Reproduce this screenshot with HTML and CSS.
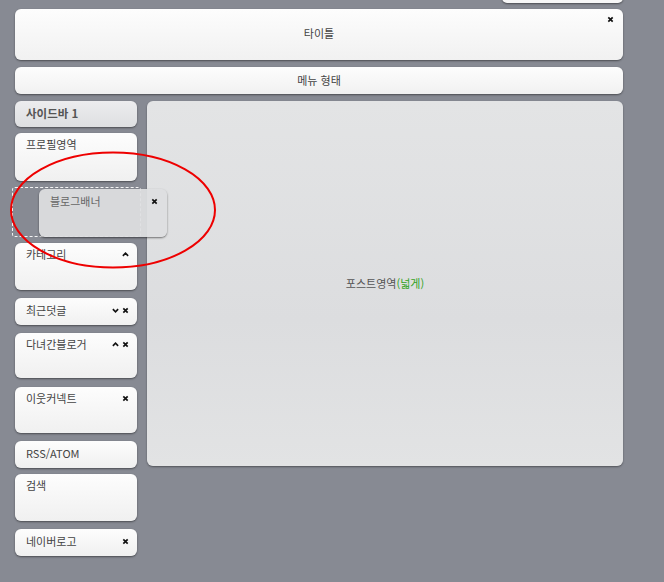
FILE: index.html
```html
<!DOCTYPE html>
<html lang="ko">
<head>
<meta charset="utf-8">
<link rel="stylesheet" href="styles.css">
</head>
<body>
<div class="page">
  <div class="peek-row"><div class="peek"></div></div>
  <div class="bar title">타이틀
    <span class="tools"><svg class="ic" viewBox="0 0 8 8"><path d="M1.5 1.5 6.5 6.5M6.5 1.5 1.5 6.5"/></svg></span>
  </div>
  <div class="bar menu">메뉴 형태</div>
  <div class="content">
    <div class="sidebar">
      <div class="item head h26">사이드바 1</div>
      <div class="item h48 m6">프로필영역</div>
      <div class="placeholder m6">
        <div class="dragging">블로그배너
          <span class="tools"><svg class="ic" viewBox="0 0 8 8"><path d="M1.5 1.5 6.5 6.5M6.5 1.5 1.5 6.5"/></svg></span>
        </div>
      </div>
      <div class="item h47 m6">카테고리
        <span class="tools"><svg class="ic" viewBox="0 0 8 8"><path d="M1 5.5 4 2.5 7 5.5"/></svg></span>
      </div>
      <div class="item h27 m8">최근덧글
        <span class="tools"><svg class="ic" viewBox="0 0 8 8"><path d="M1 2.5 4 5.5 7 2.5"/></svg><svg class="ic" viewBox="0 0 8 8"><path d="M1.5 1.5 6.5 6.5M6.5 1.5 1.5 6.5"/></svg></span>
      </div>
      <div class="item h45 m8">다녀간블로거
        <span class="tools"><svg class="ic" viewBox="0 0 8 8"><path d="M1 5.5 4 2.5 7 5.5"/></svg><svg class="ic" viewBox="0 0 8 8"><path d="M1.5 1.5 6.5 6.5M6.5 1.5 1.5 6.5"/></svg></span>
      </div>
      <div class="item h46 m9">이웃커넥트
        <span class="tools"><svg class="ic" viewBox="0 0 8 8"><path d="M1.5 1.5 6.5 6.5M6.5 1.5 1.5 6.5"/></svg></span>
      </div>
      <div class="item h27 m8">RSS/ATOM</div>
      <div class="item h47 m6">검색</div>
      <div class="item h27 m8">네이버로고
        <span class="tools"><svg class="ic" viewBox="0 0 8 8"><path d="M1.5 1.5 6.5 6.5M6.5 1.5 1.5 6.5"/></svg></span>
      </div>
    </div>
    <div class="main">
      <span>포스트영역<span class="green">(넓게)</span></span>
    </div>
  </div>
  <svg class="mark" width="210" height="120" viewBox="0 0 210 120"><ellipse cx="105" cy="60" rx="102" ry="57.5" fill="none" stroke="#ee0000" stroke-width="2"/></svg>
</div>
</body>
</html>
```

FILE: styles.css
```css
* { box-sizing: border-box; }
html, body { margin: 0; padding: 0; }
body {
  background: #878a93;
  font-family: "Noto Sans CJK KR", "Liberation Sans", sans-serif;
  font-size: 11px;
  color: #444;
  width: 664px;
  height: 582px;
  overflow: hidden;
}
.page {
  position: relative;
  padding: 0 41px 0 15px;
}
.peek-row { display: flex; justify-content: flex-end; }
.peek {
  width: 121px;
  height: 14px;
  margin-top: -11px;
  background: #f7f7f7;
  border-radius: 0 0 5px 5px;
  box-shadow: 0 1px 2px rgba(0,0,0,.45);
}
.bar {
  position: relative;
  display: flex;
  align-items: center;
  justify-content: center;
  background: linear-gradient(#fdfdfd, #f1f1f1);
  border-radius: 6px;
  box-shadow: 0 1px 2px rgba(0,0,0,.45);
}
.title { height: 51px; margin-top: 6px; padding-bottom: 4px; }
.menu { height: 27px; margin-top: 7px; padding-bottom: 1px; }
.bar .tools { position: absolute; right: 9px; top: 7px; }
.content {
  display: flex;
  gap: 10px;
  margin-top: 7px;
  align-items: flex-start;
}
.sidebar {
  width: 122px;
  display: flex;
  flex-direction: column;
}
.item {
  position: relative;
  background: linear-gradient(#fdfdfd, #f0f0f0);
  border-radius: 6px;
  box-shadow: 0 1px 2px rgba(0,0,0,.45);
  padding: 4px 10px 0 11px;
  line-height: 15px;
  color: #444;
}
.item.head {
  background: linear-gradient(#ececee, #dedfe1);
  font-weight: bold;
  font-size: 11.5px;
  padding-top: 5px;
  color: #555;
}
.h26 { height: 26px; }
.h27 { height: 27px; padding-top: 5px; }
.h45 { height: 45px; }
.h46 { height: 46px; }
.h47 { height: 47px; }
.h48 { height: 48px; }
.m6 { margin-top: 6px; }
.m8 { margin-top: 8px; }
.m9 { margin-top: 9px; }
.tools {
  position: absolute;
  right: 8px;
  top: 8px;
  display: flex;
  gap: 3px;
}
.h27 .tools { top: 9px; }
.ic {
  width: 7px;
  height: 7px;
  fill: none;
  stroke: #111;
  stroke-width: 1.9;
}
.placeholder {
  position: relative;
  height: 50px;
  margin-left: -3px;
  margin-right: -4px;
  border: 1px dashed #f4f4f4;
  border-radius: 3px;
}
.dragging {
  position: absolute;
  left: 26px;
  top: 1px;
  width: 128px;
  height: 48px;
  background: rgba(222,223,225,.93);
  border-radius: 6px;
  box-shadow: 0 1px 2px rgba(0,0,0,.5);
  color: #666;
  padding: 5px 11px 0 11px;
  line-height: 15px;
}
.dragging .tools { top: 9px; right: 9px; }
.main {
  flex: 1;
  height: 365px;
  border-radius: 6px;
  background: linear-gradient(#e3e4e5, #dcdddf 60%, #e2e3e4);
  box-shadow: 0 1px 2px rgba(0,0,0,.4);
  display: flex;
  align-items: center;
  justify-content: center;
  color: #555;
  padding-bottom: 1px;
}
.green { color: #33a324; }
.mark {
  position: absolute;
  left: 8px;
  top: 150px;
}
```
